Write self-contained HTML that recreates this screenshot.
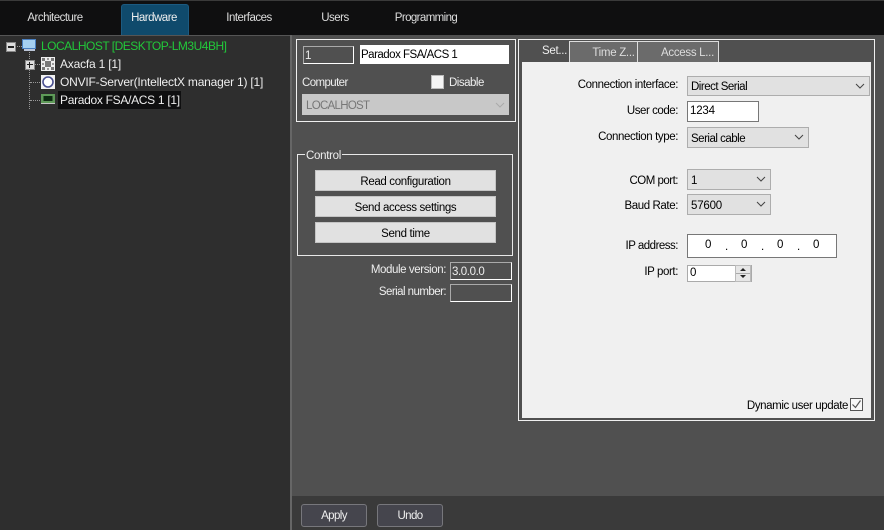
<!DOCTYPE html>
<html><head><meta charset="utf-8">
<style>
html,body{margin:0;padding:0;background:#505050}
#r{position:relative;width:884px;height:530px;overflow:hidden;background:#505050;font-family:"Liberation Sans",sans-serif;font-size:11.5px;letter-spacing:-.4px;color:#000}
#r div{position:absolute;box-sizing:border-box}
.t{white-space:nowrap;line-height:16px;height:16px}
.w{color:#eee}
.r{text-align:right}
.c{text-align:center}
.tr{font-size:12px;line-height:14px;height:14px}
.combo{background:#e1e1e1;border:1px solid #adadad;line-height:21px;padding-left:3px;white-space:nowrap;letter-spacing:-.5px}
.combo svg{position:absolute;right:4px;top:6px}
.btn{background:#e1e1e1;border:1px solid #c4c4c4;text-align:center;line-height:22px;white-space:nowrap;letter-spacing:-.35px}
.tt{color:#ddd;letter-spacing:-.5px}
.bb{background:#45454d;border:1px solid #77777c;border-radius:3px;color:#eee;text-align:center;line-height:22px;letter-spacing:-.6px}
</style></head><body>
<div id="r">
<div style="left:0;top:0;width:884px;height:35px;background:#0f0f10"></div>
<div style="left:0;top:0;width:884px;height:1px;background:#3a3a3a"></div>
<div style="left:121px;top:4px;width:68px;height:31px;background:#0f4a6c;border:1px solid #1c5a80;border-bottom:0;border-radius:3px 3px 0 0"></div>
<div class="t tt c" style="left:7px;top:10px;width:96px">Architecture</div>
<div class="t tt c" style="left:120px;top:10px;width:68px;color:#eee">Hardware</div>
<div class="t tt c" style="left:209px;top:10px;width:80px">Interfaces</div>
<div class="t tt c" style="left:300px;top:10px;width:70px">Users</div>
<div class="t tt c" style="left:381px;top:10px;width:90px;letter-spacing:-.6px">Programming</div>

<div style="left:0;top:35px;width:290px;height:495px;background:#2e2e2e"></div>
<div style="left:290px;top:35px;width:2px;height:495px;background:#666"></div>
<div style="left:0;top:35px;width:290px;height:1px;background:#555"></div>

<div style="left:15px;top:46px;width:7px;border-top:1px dotted #999"></div>
<div style="left:29px;top:52px;height:57px;border-left:1px dotted #999"></div>
<div style="left:30px;top:64px;width:12px;border-top:1px dotted #999"></div>
<div style="left:30px;top:82px;width:12px;border-top:1px dotted #999"></div>
<div style="left:30px;top:100px;width:12px;border-top:1px dotted #999"></div>
<div style="left:6px;top:42px;width:10px;height:10px;background:#ddd;border:1px solid #888"></div>
<div style="left:8px;top:46px;width:6px;height:2px;background:#222"></div>
<div style="left:25px;top:60px;width:10px;height:10px;background:#ddd;border:1px solid #888"></div>
<div style="left:27px;top:64px;width:6px;height:1px;background:#222"></div>
<div style="left:29px;top:62px;width:1px;height:6px;background:#222"></div>
<svg style="position:absolute;left:22px;top:39px" width="15" height="13"><rect x=".5" y=".5" width="13" height="9" fill="#a6d0f0" stroke="#4a7fc0"/><rect x="2" y="10" width="11" height="2" fill="#bcc6d8"/></svg>
<svg style="position:absolute;left:41px;top:57px" width="14" height="14"><rect width="14" height="14" fill="#eee"/><rect x="4" y="4" width="6" height="6" fill="#777"/><rect x="1" y="1" width="3" height="3" fill="#777"/><rect x="10" y="1" width="3" height="3" fill="#777"/><rect x="1" y="10" width="3" height="3" fill="#777"/><rect x="10" y="10" width="3" height="3" fill="#777"/><rect x="6" y="1" width="2" height="2" fill="#999"/><rect x="6" y="11" width="2" height="2" fill="#999"/><rect x="1" y="6" width="2" height="2" fill="#999"/><rect x="11" y="6" width="2" height="2" fill="#999"/></svg>
<svg style="position:absolute;left:41px;top:75px" width="14" height="14"><rect width="14" height="14" fill="#f2f2f2"/><circle cx="7" cy="7" r="5" fill="#fff" stroke="#4a5090" stroke-width="1.600"/></svg>
<svg style="position:absolute;left:41px;top:94px" width="14" height="11"><rect width="14" height="9" fill="#5e9a58"/><rect x="2.500" y="2" width="9" height="5" fill="#0e2a12"/><rect y="9" width="14" height="1" fill="#c4c4c4"/></svg>
<div style="left:58px;top:91px;width:123px;height:18px;background:#0f0f10"></div>
<div class="t tr" style="left:41px;top:39px;color:#22c83a;letter-spacing:-.5px">LOCALHOST [DESKTOP-LM3U4BH]</div>
<div class="t w tr" style="left:60px;top:57px;letter-spacing:-.2px">Axacfa 1 [1]</div>
<div class="t w tr" style="left:60px;top:75px;letter-spacing:-.2px">ONVIF-Server(IntellectX manager 1) [1]</div>
<div class="t w tr" style="left:60px;top:93px;letter-spacing:-.3px">Paradox FSA/ACS 1 [1]</div>

<div style="left:296px;top:39px;width:220px;height:83px;border:1px solid #f0f0f0"></div>
<div class="t w" style="left:303px;top:46px;width:51px;height:18px;border:1px solid;border-color:#aaa #fff #fff #aaa;padding-left:1px;line-height:18px">1</div>
<div class="t" style="left:360px;top:45px;width:149px;height:19px;background:#fff;padding-left:1px;line-height:20px;letter-spacing:-.5px">Paradox FSA/ACS 1</div>
<div class="t w" style="left:302px;top:75px;letter-spacing:-.6px">Computer</div>
<div style="left:431px;top:75px;width:13px;height:14px;background:#f4f4f4;border:1px solid #bbb"></div>
<div class="t w" style="left:449px;top:75px;letter-spacing:-.5px">Disable</div>
<div style="left:302px;top:94px;width:207px;height:21px;background:#c8c8c8"></div>
<div class="t" style="left:306px;top:98px;color:#777;letter-spacing:-.7px">LOCALHOST</div>
<svg style="position:absolute;left:495px;top:102px" width="10" height="6"><path d="M1 1l4 4 4-4" fill="none" stroke="#aaa"/></svg>

<div style="left:297px;top:154px;width:216px;height:102px;border:1px solid #e8e8e8"></div>
<div class="t w" style="left:305px;top:148px;background:#505050;padding:0 1px;letter-spacing:-.3px">Control</div>
<div class="btn" style="left:315px;top:170px;width:181px;height:21px">Read configuration</div>
<div class="btn" style="left:315px;top:196px;width:181px;height:21px">Send access settings</div>
<div class="btn" style="left:315px;top:222px;width:181px;height:21px">Send time</div>
<div class="t w r" style="left:346px;top:262px;width:100px">Module version:</div>
<div class="t w" style="left:450px;top:262px;width:62px;height:18px;border:1px solid;border-color:#aaa #fff #fff #aaa;line-height:18px;padding-left:1px">3.0.0.0</div>
<div class="t w r" style="left:346px;top:284px;width:100px;letter-spacing:-.55px">Serial number:</div>
<div style="left:450px;top:284px;width:62px;height:18px;border:1px solid;border-color:#aaa #fff #fff #aaa"></div>

<div style="left:518px;top:39px;width:357px;height:382px;border:1px solid #f0f0f0"></div>
<div style="left:522px;top:62px;width:349px;height:356px;background:#f0f0f0"></div>
<div class="t w" style="left:542px;top:43px;letter-spacing:-.3px">Set...</div>
<div class="t c" style="left:569px;top:41px;width:69px;height:21px;background:#6b6b6b;border:1px solid #ddd;border-bottom:0;color:#ddd;padding-left:20px;line-height:22px;letter-spacing:-.3px">Time Z...</div>
<div class="t c" style="left:637px;top:41px;width:82px;height:21px;background:#6b6b6b;border:1px solid #ddd;border-bottom:0;color:#ddd;padding-left:19px;line-height:22px;letter-spacing:-.3px">Access L...</div>

<div class="t r" style="left:540px;top:77px;width:138px">Connection interface:</div>
<div class="combo" style="left:687px;top:76px;width:183px;height:20px;line-height:20px">Direct Serial<svg width="10" height="6"><path d="M1 1l4 4 4-4" fill="none" stroke="#444"/></svg></div>
<div class="t r" style="left:560px;top:103px;width:118px;letter-spacing:-.45px">User code:</div>
<div style="left:687px;top:101px;width:72px;height:21px;background:#fff;border:1px solid #777;padding-left:2px;line-height:19px;letter-spacing:-.2px">1234</div>
<div class="t r" style="left:560px;top:129px;width:118px">Connection type:</div>
<div class="combo" style="left:687px;top:127px;width:122px;height:21px;line-height:22px">Serial cable<svg width="10" height="6"><path d="M1 1l4 4 4-4" fill="none" stroke="#444"/></svg></div>
<div class="t r" style="left:600px;top:173px;width:78px;letter-spacing:-.5px">COM port:</div>
<div class="combo" style="left:687px;top:169px;width:84px;height:21px;line-height:22px">1<svg width="10" height="6"><path d="M1 1l4 4 4-4" fill="none" stroke="#444"/></svg></div>
<div class="t r" style="left:600px;top:198px;width:78px">Baud Rate:</div>
<div class="combo" style="left:687px;top:194px;width:84px;height:21px;line-height:22px;letter-spacing:-.2px">57600<svg width="10" height="6"><path d="M1 1l4 4 4-4" fill="none" stroke="#444"/></svg></div>
<div class="t r" style="left:600px;top:238px;width:78px;letter-spacing:-.5px">IP address:</div>
<div style="left:687px;top:234px;width:150px;height:24px;background:#fff;border:1px solid #777"></div>
<div class="t" style="left:705px;top:237px">0</div>
<div class="t" style="left:725px;top:239px">.</div>
<div class="t" style="left:741px;top:237px">0</div>
<div class="t" style="left:761px;top:239px">.</div>
<div class="t" style="left:777px;top:237px">0</div>
<div class="t" style="left:797px;top:239px">.</div>
<div class="t" style="left:813px;top:237px">0</div>
<div class="t r" style="left:600px;top:264px;width:78px">IP port:</div>
<div style="left:687px;top:265px;width:65px;height:17px;background:#fff;border:1px solid #aaa;padding-left:2px;line-height:15px">0</div>
<div style="left:735px;top:265px;width:16px;height:17px;background:#e6e6e6;border:1px solid #bbb"></div>
<div style="left:736px;top:273px;width:14px;height:1px;background:#aaa"></div>
<svg style="position:absolute;left:739px;top:267px" width="8" height="13"><path d="M4 1l3 3H1zM1 8h6l-3 3z" fill="#222"/></svg>

<div class="t r" style="left:700px;top:398px;width:148px">Dynamic user update</div>
<div style="left:850px;top:398px;width:13px;height:13px;background:#f8f8f8;border:1px solid #555"></div>
<svg style="position:absolute;left:851px;top:399px" width="11" height="11"><path d="M1.500 5.500l3 3 5-7" fill="none" stroke="#555" stroke-width="1.200"/></svg>

<div style="left:292px;top:496px;width:592px;height:34px;background:#3a3a3a"></div>
<div class="bb" style="left:301px;top:504px;width:66px;height:23px">Apply</div>
<div class="bb" style="left:377px;top:504px;width:66px;height:23px">Undo</div>
</div>
</body></html>
